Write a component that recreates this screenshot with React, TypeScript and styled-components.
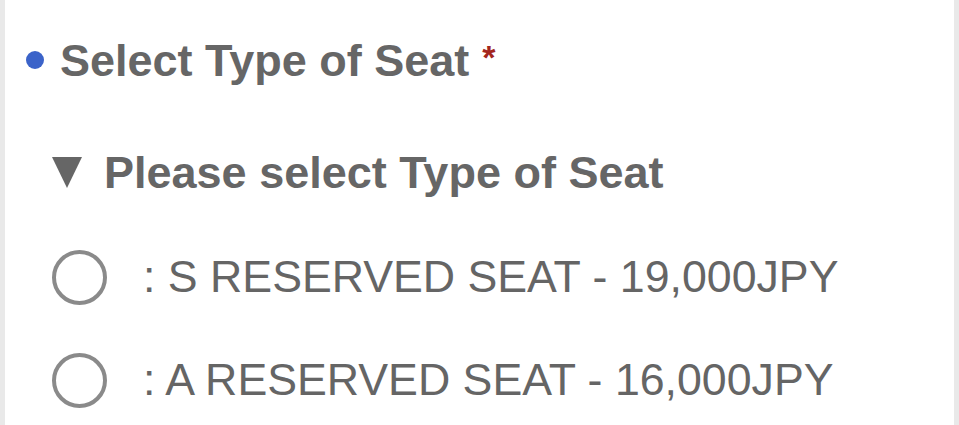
import React from "react";
import styled, { createGlobalStyle } from "styled-components";

const GlobalStyle = createGlobalStyle`
  html, body { margin: 0; padding: 0; background: #ffffff; }
  body { font-family: "Liberation Sans", Arial, Helvetica, sans-serif; }
  * { box-sizing: border-box; }
`;

const Card = styled.section`
  width: 959px;
  height: 425px;
  background: #ffffff;
  border-left: 5px solid #e9e9e9;
  border-right: 5px solid #e9e9e9;
  display: flex;
  flex-direction: column;
  padding-top: 20px;
  overflow: hidden;
`;

const TitleRow = styled.div`
  flex: none;
  height: 80px;
  display: flex;
  align-items: center;
  padding-left: 21px;
  gap: 16px;
`;

const Dot = styled.span`
  width: 18px;
  height: 18px;
  border-radius: 50%;
  background: #3b63c9;
  flex: none;
`;

const Title = styled.h2`
  margin: 0;
  font-size: 45px;
  line-height: 1;
  font-weight: 700;
  color: #666666;
  display: flex;
  align-items: flex-start;
`;

const Required = styled.span`
  color: #a3261d;
  font-size: 34px;
  line-height: 1;
  margin-left: 13px;
  margin-top: 2px;
`;

const GroupRow = styled.div`
  flex: none;
  margin-top: 32px;
  height: 80px;
  display: flex;
  align-items: center;
  padding-left: 47px;
  gap: 22px;
`;

const Caret = styled.svg`
  width: 30px;
  height: 31px;
  flex: none;
`;

const GroupLabel = styled.span`
  font-size: 45px;
  line-height: 1;
  font-weight: 700;
  color: #666666;
`;

const Options = styled.div`
  flex: none;
  margin-top: 14px;
  display: flex;
  flex-direction: column;
`;

const OptionRow = styled.label`
  flex: none;
  height: 103px;
  display: flex;
  align-items: center;
  padding-left: 47px;
  gap: 36px;
  cursor: pointer;
`;

const RadioInput = styled.input`
  appearance: none;
  -webkit-appearance: none;
  margin: 0;
  width: 55px;
  height: 55px;
  border-radius: 50%;
  border: 4px solid #8a8a8a;
  background: #ffffff;
  flex: none;
`;

const OptionText = styled.span`
  font-size: 44.7px;
  line-height: 1;
  font-weight: 400;
  color: #656565;
  white-space: nowrap;
`;

const options = [
  ": S RESERVED SEAT - 19,000JPY",
  ": A RESERVED SEAT - 16,000JPY",
];

export default function App() {
  return (
    <>
      <GlobalStyle />
      <Card>
        <TitleRow>
          <Dot />
          <Title>
            Select Type of Seat<Required>*</Required>
          </Title>
        </TitleRow>
        <GroupRow>
          <Caret viewBox="0 0 30 31" aria-hidden="true">
            <polygon points="0,0 30,0 15,31" fill="#666666" />
          </Caret>
          <GroupLabel>Please select Type of Seat</GroupLabel>
        </GroupRow>
        <Options>
          {options.map((o) => (
            <OptionRow key={o}>
              <RadioInput type="radio" name="seat" />
              <OptionText>{o}</OptionText>
            </OptionRow>
          ))}
        </Options>
      </Card>
    </>
  );
}
